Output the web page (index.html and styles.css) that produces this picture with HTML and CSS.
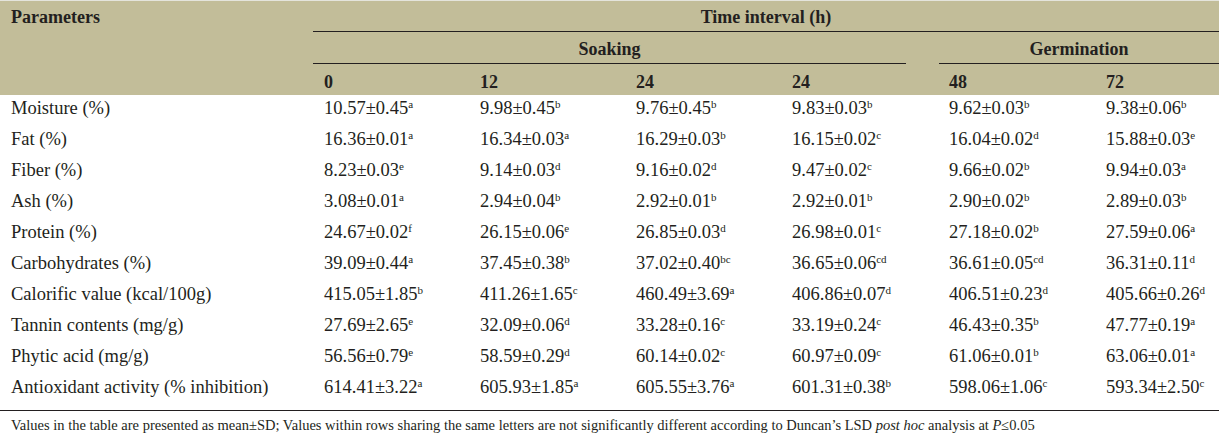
FILE: index.html
```html
<!DOCTYPE html>
<html lang="en">
<head>
<meta charset="utf-8">
<title>Table</title>
<link rel="stylesheet" href="styles.css">
</head>
<body>
<div class="tbl">
  <div class="head">
    <div class="h-param">Parameters</div>
    <div class="h-time">Time interval (h)</div>
    <div class="h-soak">Soaking</div>
    <div class="h-germ">Germination</div>
    <div class="h-col">0</div>
    <div class="h-col">12</div>
    <div class="h-col">24</div>
    <div class="h-col">24</div>
    <div class="h-col">48</div>
    <div class="h-col">72</div>
  </div>
  <div class="body">
    <div class="c">Moisture (%)</div>
    <div class="c">10.57±0.45<sup>a</sup></div>
    <div class="c">9.98±0.45<sup>b</sup></div>
    <div class="c">9.76±0.45<sup>b</sup></div>
    <div class="c">9.83±0.03<sup>b</sup></div>
    <div class="c">9.62±0.03<sup>b</sup></div>
    <div class="c">9.38±0.06<sup>b</sup></div>

    <div class="c">Fat (%)</div>
    <div class="c">16.36±0.01<sup>a</sup></div>
    <div class="c">16.34±0.03<sup>a</sup></div>
    <div class="c">16.29±0.03<sup>b</sup></div>
    <div class="c">16.15±0.02<sup>c</sup></div>
    <div class="c">16.04±0.02<sup>d</sup></div>
    <div class="c">15.88±0.03<sup>e</sup></div>

    <div class="c">Fiber (%)</div>
    <div class="c">8.23±0.03<sup>e</sup></div>
    <div class="c">9.14±0.03<sup>d</sup></div>
    <div class="c">9.16±0.02<sup>d</sup></div>
    <div class="c">9.47±0.02<sup>c</sup></div>
    <div class="c">9.66±0.02<sup>b</sup></div>
    <div class="c">9.94±0.03<sup>a</sup></div>

    <div class="c">Ash (%)</div>
    <div class="c">3.08±0.01<sup>a</sup></div>
    <div class="c">2.94±0.04<sup>b</sup></div>
    <div class="c">2.92±0.01<sup>b</sup></div>
    <div class="c">2.92±0.01<sup>b</sup></div>
    <div class="c">2.90±0.02<sup>b</sup></div>
    <div class="c">2.89±0.03<sup>b</sup></div>

    <div class="c">Protein (%)</div>
    <div class="c">24.67±0.02<sup>f</sup></div>
    <div class="c">26.15±0.06<sup>e</sup></div>
    <div class="c">26.85±0.03<sup>d</sup></div>
    <div class="c">26.98±0.01<sup>c</sup></div>
    <div class="c">27.18±0.02<sup>b</sup></div>
    <div class="c">27.59±0.06<sup>a</sup></div>

    <div class="c">Carbohydrates (%)</div>
    <div class="c">39.09±0.44<sup>a</sup></div>
    <div class="c">37.45±0.38<sup>b</sup></div>
    <div class="c">37.02±0.40<sup>bc</sup></div>
    <div class="c">36.65±0.06<sup>cd</sup></div>
    <div class="c">36.61±0.05<sup>cd</sup></div>
    <div class="c">36.31±0.11<sup>d</sup></div>

    <div class="c">Calorific value (kcal/100g)</div>
    <div class="c">415.05±1.85<sup>b</sup></div>
    <div class="c">411.26±1.65<sup>c</sup></div>
    <div class="c">460.49±3.69<sup>a</sup></div>
    <div class="c">406.86±0.07<sup>d</sup></div>
    <div class="c">406.51±0.23<sup>d</sup></div>
    <div class="c">405.66±0.26<sup>d</sup></div>

    <div class="c">Tannin contents (mg/g)</div>
    <div class="c">27.69±2.65<sup>e</sup></div>
    <div class="c">32.09±0.06<sup>d</sup></div>
    <div class="c">33.28±0.16<sup>c</sup></div>
    <div class="c">33.19±0.24<sup>c</sup></div>
    <div class="c">46.43±0.35<sup>b</sup></div>
    <div class="c">47.77±0.19<sup>a</sup></div>

    <div class="c">Phytic acid (mg/g)</div>
    <div class="c">56.56±0.79<sup>e</sup></div>
    <div class="c">58.59±0.29<sup>d</sup></div>
    <div class="c">60.14±0.02<sup>c</sup></div>
    <div class="c">60.97±0.09<sup>c</sup></div>
    <div class="c">61.06±0.01<sup>b</sup></div>
    <div class="c">63.06±0.01<sup>a</sup></div>

    <div class="c">Antioxidant activity (% inhibition)</div>
    <div class="c">614.41±3.22<sup>a</sup></div>
    <div class="c">605.93±1.85<sup>a</sup></div>
    <div class="c">605.55±3.76<sup>a</sup></div>
    <div class="c">601.31±0.38<sup>b</sup></div>
    <div class="c">598.06±1.06<sup>c</sup></div>
    <div class="c">593.34±2.50<sup>c</sup></div>
  </div>
  <div class="note">Values in the table are presented as mean±SD; Values within rows sharing the same letters are not significantly different according to Duncan’s LSD <i>post hoc</i> analysis at <i>P</i>≤0.05</div>
</div>
</body>
</html>
```

FILE: styles.css
```css
html, body {
  margin: 0;
  padding: 0;
  background: #ffffff;
}

.tbl {
  width: 1219px;
  font-family: "Liberation Serif", "Times New Roman", serif;
  color: #231f20;
  --cols: 313px 156px 156px 156px 157px 157px 1fr;
}

.head {
  display: grid;
  grid-template-columns: var(--cols);
  grid-template-rows: 31px 32px 31px;
  background: #c2bd99;
  border-top: 1px solid #e4e4dc;
  font-weight: bold;
  font-size: 18px;
  line-height: 20px;
}

.h-param {
  grid-column: 1;
  grid-row: 1 / 4;
  padding: 6px 0 0 11px;
}

.h-time {
  grid-column: 2 / 8;
  grid-row: 1;
  text-align: center;
  padding-top: 6px;
  border-bottom: 1px solid #231f20;
}

.h-soak {
  grid-column: 2 / 6;
  grid-row: 2;
  text-align: center;
  padding-top: 7px;
  margin-right: 32px;
  border-bottom: 1px solid #231f20;
}

.h-germ {
  grid-column: 6 / 8;
  grid-row: 2;
  text-align: center;
  padding-top: 7px;
  margin-left: 1px;
  border-bottom: 1px solid #231f20;
}

.h-col {
  grid-row: 3;
  padding: 8px 0 0 11px;
}

.body {
  display: grid;
  grid-template-columns: var(--cols);
  grid-auto-rows: 31px;
  padding-bottom: 5px;
  font-size: 18.5px;
  line-height: 20px;
  border-bottom: 1px solid #231f20;
}

.c {
  padding: 3px 0 0 11px;
  white-space: nowrap;
}

.c sup {
  font-size: 11px;
  line-height: 0;
  vertical-align: 6px;
}

.note {
  font-size: 14.5px;
  line-height: 16px;
  padding: 6px 0 0 11px;
  white-space: nowrap;
}
```
